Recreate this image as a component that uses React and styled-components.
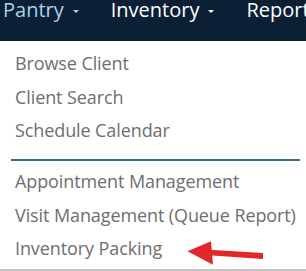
import React from 'react'
import styled, { createGlobalStyle } from 'styled-components'

const Global = createGlobalStyle`
  html, body {
    margin: 0;
    padding: 0;
    background: #ffffff;
    overflow: hidden;
  }
  body {
    font-family: "Open Sans", "Noto Sans", sans-serif;
  }
`

const Page = styled.div`
  width: 306px;
  height: 271px;
  display: flex;
  flex-direction: column;
`

const NavBar = styled.div`
  height: 41px;
  flex-shrink: 0;
  background-color: #0b1f35;
  display: flex;
  align-items: flex-start;
  padding: 0 0 0 3px;
  overflow: hidden;
  white-space: nowrap;
`

const NavItem = styled.div`
  display: flex;
  align-items: center;
  gap: 9px;
  height: 20px;
  line-height: 20px;
  margin-right: ${p => p.$gap || 0}px;
  font-size: 20px;
  color: ${p => (p.$active ? '#a9d2ec' : '#ffffff')};
`

const Caret = styled.span`
  width: 0;
  height: 0;
  border-left: 3.5px solid transparent;
  border-right: 3.5px solid transparent;
  border-top: 3.5px solid currentColor;
  margin-top: 2px;
`

const Menu = styled.div`
  flex: 1;
  display: flex;
  flex-direction: column;
  padding-top: 6px;
  border-bottom: 2px solid #c4c4c4;
`

const Group = styled.ul`
  list-style: none;
  margin: 0;
  padding: 0 0 0 15px;
`

const Item = styled.li`
  position: relative;
  height: 33.5px;
  line-height: 33.5px;
  font-size: 18px;
  letter-spacing: -0.1px;
  color: #6e6e6e;
`

const Divider = styled.hr`
  margin: 11.5px 6px 4px 11px;
  border: 0;
  border-top: 2px solid #3d6f7f;
`

const Arrow = styled.svg`
  position: absolute;
  left: 170px;
  top: 5px;
`

export default function App() {
  return (
    <Page>
      <Global />
      <NavBar>
        <NavItem $active $gap={32}>Pantry<Caret /></NavItem>
        <NavItem $gap={32}>Inventory<Caret /></NavItem>
        <NavItem>Reports</NavItem>
      </NavBar>
      <Menu>
        <Group>
          <Item>Browse Client</Item>
          <Item>Client Search</Item>
          <Item>Schedule Calendar</Item>
        </Group>
        <Divider />
        <Group>
          <Item>Appointment Management</Item>
          <Item>Visit Management (Queue Report)</Item>
          <Item>
            Inventory Packing
            <Arrow width="80" height="30" viewBox="0 0 80 30">
              <polygon points="20,12.5 78,16 78,22 20,18" fill="#e2272b" />
              <polygon points="2.5,14.2 26,4.2 28,27.7" fill="#e2272b" />
            </Arrow>
          </Item>
        </Group>
      </Menu>
    </Page>
  )
}
